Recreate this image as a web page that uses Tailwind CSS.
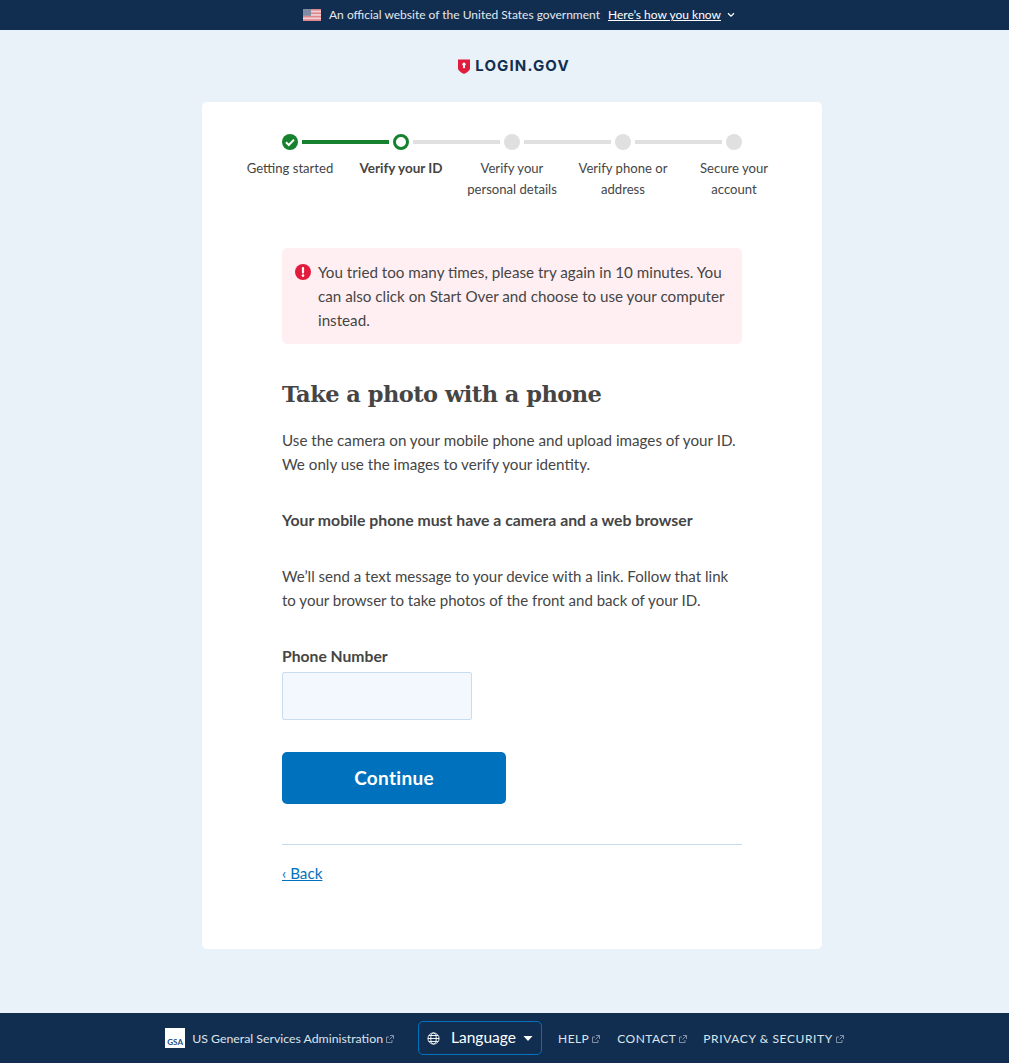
<!DOCTYPE html>
<html lang="en">
<head>
    <meta charset="UTF-8">
    <meta name="viewport" content="width=device-width, initial-scale=1.0">
    <title>Take a photo with a phone</title>
    <script src="https://cdn.jsdelivr.net/npm/@tailwindcss/browser@4"></script>
</head>
<body class="bg-[#e9f1f9] h-[1063px] flex flex-col font-['Lato',sans-serif] text-[#454545] overflow-hidden">
    <!-- gov banner -->
    <div class="h-[30px] shrink-0 bg-[#112e51] flex items-center justify-center pl-[29px] text-[12px] text-[#e4e8ee]">
        <svg class="w-[18px] h-[12px] mr-[8px]" viewBox="0 0 18 12">
            <rect width="18" height="12" fill="#f0d3d6"/>
            <rect width="18" height="1.7" fill="#e0868f"/>
            <rect y="3.4" width="18" height="1.7" fill="#e0868f"/>
            <rect y="6.8" width="18" height="1.7" fill="#e0868f"/>
            <rect y="10.2" width="18" height="1.8" fill="#e0868f"/>
            <rect width="8" height="6.8" fill="#7f8aa3"/>
        </svg>
        <span>An official website of the United States government</span>
        <a href="#" class="ml-[8px] underline text-white">Here’s how you know</a>
        <svg class="w-[8px] h-[6px] ml-[6px]" viewBox="0 0 8 6" fill="none" stroke="#fff" stroke-width="1.3"><path d="M1 1.2l3 3 3-3"/></svg>
    </div>

    <main class="flex-1 flex flex-col items-center pl-[15px]">
        <!-- logo -->
        <div class="h-[72px] flex items-center gap-[5px] ml-[4px]">
            <svg class="w-[12px] h-[15px]" viewBox="0 0 12 15">
                <path d="M0 .6h12v8.6c0 2.4-3.4 4.6-6 5.6-2.6-1-6-3.2-6-5.6z" fill="#e21c3d"/>
                <circle cx="6" cy="5.2" r="1.6" fill="#fff"/>
                <rect x="5" y="5.5" width="2" height="3.6" fill="#fff"/>
            </svg>
            <span class="text-[15px] font-bold tracking-[1.15px] text-[#112e51] font-['Inter',sans-serif]">LOGIN.GOV</span>
        </div>

        <!-- card -->
        <div class="w-[620px] h-[847px] bg-white rounded-[5px] flex flex-col">
            <!-- step indicator -->
            <div class="pt-[32px] flex justify-center text-[13.1px] leading-[21px] text-center">
                <div class="w-[111px] flex flex-col items-center">
                    <div class="relative w-full flex justify-center h-[16px]">
                        <svg class="w-[16px] h-[16px]" viewBox="0 0 16 16">
                            <circle cx="8" cy="8" r="8" fill="#16812f"/>
                            <path d="M4 8.2l2.8 2.8L12 5.6" fill="none" stroke="#fff" stroke-width="2"/>
                        </svg>
                        <div class="absolute left-[calc(50%+12px)] w-[87px] top-[6px] h-[4px] bg-[#16812f]"></div>
                    </div>
                    <span class="mt-[8px]">Getting started</span>
                </div>
                <div class="w-[111px] flex flex-col items-center">
                    <div class="relative w-full flex justify-center h-[16px]">
                        <div class="w-[16px] h-[16px] rounded-full border-[3px] border-[#16812f] bg-white"></div>
                        <div class="absolute left-[calc(50%+12px)] w-[87px] top-[6px] h-[4px] bg-[#e0e0e0]"></div>
                    </div>
                    <span class="mt-[8px] font-bold text-[13.5px]">Verify your ID</span>
                </div>
                <div class="w-[111px] flex flex-col items-center">
                    <div class="relative w-full flex justify-center h-[16px]">
                        <div class="w-[16px] h-[16px] rounded-full bg-[#e0e0e0]"></div>
                        <div class="absolute left-[calc(50%+12px)] w-[87px] top-[6px] h-[4px] bg-[#e0e0e0]"></div>
                    </div>
                    <span class="mt-[8px]">Verify your<br>personal details</span>
                </div>
                <div class="w-[111px] flex flex-col items-center">
                    <div class="relative w-full flex justify-center h-[16px]">
                        <div class="w-[16px] h-[16px] rounded-full bg-[#e0e0e0]"></div>
                        <div class="absolute left-[calc(50%+12px)] w-[87px] top-[6px] h-[4px] bg-[#e0e0e0]"></div>
                    </div>
                    <span class="mt-[8px]">Verify phone or<br>address</span>
                </div>
                <div class="w-[111px] flex flex-col items-center">
                    <div class="w-[16px] h-[16px] rounded-full bg-[#e0e0e0]"></div>
                    <span class="mt-[8px]">Secure your<br>account</span>
                </div>
            </div>

            <div class="mx-[80px] mt-[48px] flex-1 flex flex-col text-[15.2px] leading-[24px]">
                <!-- alert -->
                <div class="bg-[#ffeff2] rounded-[5px] pl-[13px] pr-[12px] py-[12px] flex gap-[7px]">
                    <svg class="w-[16px] h-[16px] mt-[4px] shrink-0" viewBox="0 0 16 16">
                        <circle cx="8" cy="8" r="8" fill="#e21c3d"/>
                        <rect x="6.9" y="3" width="2.2" height="6.4" rx="1" fill="#fff"/>
                        <circle cx="8" cy="11.6" r="1.3" fill="#fff"/>
                    </svg>
                    <p>You tried too many times, please try again in 10 minutes. You can also click on Start Over and choose to use your computer instead.</p>
                </div>

                <h1 class="mt-[32px] font-['DejaVu_Serif',serif] font-bold text-[22.5px] tracking-[-0.52px] leading-[36px]">Take a photo with a phone</h1>
                <p class="mt-[16px]">Use the camera on your mobile phone and upload images of your ID. We only use the images to verify your identity.</p>
                <p class="mt-[32px] font-bold text-[15.8px]">Your mobile phone must have a camera and a web browser</p>
                <p class="mt-[32px] text-[15.05px]">We’ll send a text message to your device with a link. Follow that link to your browser to take photos of the front and back of your ID.</p>

                <label class="mt-[32px] font-bold text-[15.7px]">Phone Number</label>
                <input type="text" class="mt-[4px] w-[190px] h-[48px] bg-[#f2f8fe] border border-[#c9dcee] rounded-[2px]">

                <button class="mt-[32px] w-[224px] h-[52px] bg-[#0071bc] text-white rounded-[5px] font-bold text-[19px] tracking-[0.3px]">Continue</button>

                <div class="mt-[40px] border-t border-[#c9dcee] pt-[16px]">
                    <a href="#" class="text-[#0071bc] underline">‹ Back</a>
                </div>
            </div>
        </div>
    </main>

    <!-- footer -->
    <footer class="h-[50px] shrink-0 bg-[#112e51] flex items-center justify-center text-[#dfe4ea] text-[12.3px]">
        <div class="w-[20px] h-[20px] bg-white flex items-end justify-center text-[8px] leading-[11px] font-bold text-[#1a4f8a] mr-[7px]">GSA</div>
        <span class="mt-[2px]">US General Services Administration</span>
        <svg class="w-[8px] h-[8px] ml-[3px] mt-[2px]" viewBox="0 0 8 8" fill="none" stroke="#8c9bb0" stroke-width="0.9"><path d="M6 5v2.5H.5V2H3M4 .5h3.5V4M7.5.5L3.5 4.5"/></svg>
        <div class="ml-[24px] w-[124px] h-[34px] border border-[#0071bc] rounded-[5px] flex items-center pl-[8px] text-[15.5px] text-white">
            <svg class="w-[13px] h-[13px]" viewBox="0 0 14 14" fill="none" stroke="#fff" stroke-width="1"><circle cx="7" cy="7" r="6"/><ellipse cx="7" cy="7" rx="3" ry="6"/><path d="M1 7h12M2 3.8h10M2 10.2h10"/></svg>
            <span class="ml-[11px]">Language</span>
            <svg class="w-[10px] h-[5px] ml-[7px]" viewBox="0 0 9 5" fill="#fff"><path d="M0 0h9L4.5 5z"/></svg>
        </div>
        <span class="ml-[16px] mt-[2px] text-[12px] tracking-[0.45px]">HELP</span>
        <svg class="w-[8px] h-[8px] ml-[3px] mt-[2px]" viewBox="0 0 8 8" fill="none" stroke="#8c9bb0" stroke-width="0.9"><path d="M6 5v2.5H.5V2H3M4 .5h3.5V4M7.5.5L3.5 4.5"/></svg>
        <span class="ml-[17px] mt-[2px] text-[12px] tracking-[0.45px]">CONTACT</span>
        <svg class="w-[8px] h-[8px] ml-[3px] mt-[2px]" viewBox="0 0 8 8" fill="none" stroke="#8c9bb0" stroke-width="0.9"><path d="M6 5v2.5H.5V2H3M4 .5h3.5V4M7.5.5L3.5 4.5"/></svg>
        <span class="ml-[16px] mt-[2px] text-[12px] tracking-[0.6px]">PRIVACY &amp; SECURITY</span>
        <svg class="w-[8px] h-[8px] ml-[3px] mt-[2px]" viewBox="0 0 8 8" fill="none" stroke="#8c9bb0" stroke-width="0.9"><path d="M6 5v2.5H.5V2H3M4 .5h3.5V4M7.5.5L3.5 4.5"/></svg>
    </footer>
</body>
</html>
